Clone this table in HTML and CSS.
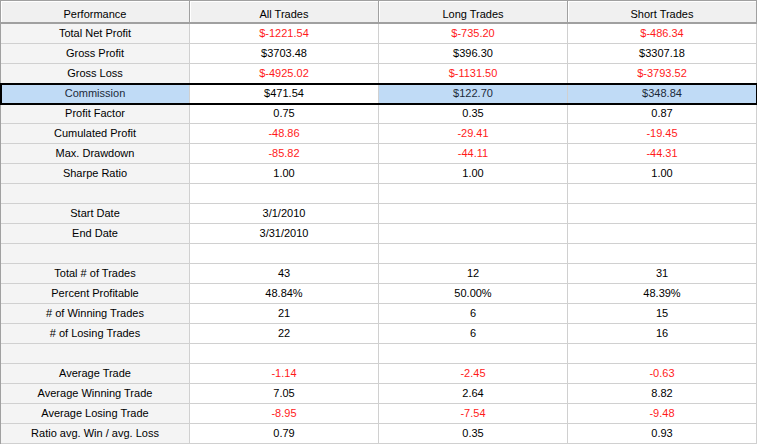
FILE: index.html
```html
<!DOCTYPE html>
<html>
<head>
<meta charset="utf-8">
<link rel="stylesheet" href="styles.css">
</head>
<body>
<div class="grid">
  <div class="row head">
    <div class="hc">Performance</div><div class="hc">All Trades</div><div class="hc">Long Trades</div><div class="hc">Short Trades</div>
  </div>
  <div class="row"><div class="lbl">Total Net Profit</div><div class="c neg">$-1221.54</div><div class="c neg">$-735.20</div><div class="c neg">$-486.34</div></div>
  <div class="row"><div class="lbl">Gross Profit</div><div class="c">$3703.48</div><div class="c">$396.30</div><div class="c">$3307.18</div></div>
  <div class="row"><div class="lbl">Gross Loss</div><div class="c neg">$-4925.02</div><div class="c neg">$-1131.50</div><div class="c neg">$-3793.52</div></div>
  <div class="row sel"><div class="lbl">Commission</div><div class="c cur">$471.54</div><div class="c">$122.70</div><div class="c">$348.84</div></div>
  <div class="row"><div class="lbl">Profit Factor</div><div class="c">0.75</div><div class="c">0.35</div><div class="c">0.87</div></div>
  <div class="row"><div class="lbl">Cumulated Profit</div><div class="c neg">-48.86</div><div class="c neg">-29.41</div><div class="c neg">-19.45</div></div>
  <div class="row"><div class="lbl">Max. Drawdown</div><div class="c neg">-85.82</div><div class="c neg">-44.11</div><div class="c neg">-44.31</div></div>
  <div class="row"><div class="lbl">Sharpe Ratio</div><div class="c">1.00</div><div class="c">1.00</div><div class="c">1.00</div></div>
  <div class="row"><div class="lbl"></div><div class="c"></div><div class="c"></div><div class="c"></div></div>
  <div class="row"><div class="lbl">Start Date</div><div class="c">3/1/2010</div><div class="c"></div><div class="c"></div></div>
  <div class="row"><div class="lbl">End Date</div><div class="c">3/31/2010</div><div class="c"></div><div class="c"></div></div>
  <div class="row"><div class="lbl"></div><div class="c"></div><div class="c"></div><div class="c"></div></div>
  <div class="row"><div class="lbl">Total # of Trades</div><div class="c">43</div><div class="c">12</div><div class="c">31</div></div>
  <div class="row"><div class="lbl">Percent Profitable</div><div class="c">48.84%</div><div class="c">50.00%</div><div class="c">48.39%</div></div>
  <div class="row"><div class="lbl"># of Winning Trades</div><div class="c">21</div><div class="c">6</div><div class="c">15</div></div>
  <div class="row"><div class="lbl"># of Losing Trades</div><div class="c">22</div><div class="c">6</div><div class="c">16</div></div>
  <div class="row"><div class="lbl"></div><div class="c"></div><div class="c"></div><div class="c"></div></div>
  <div class="row"><div class="lbl">Average Trade</div><div class="c neg">-1.14</div><div class="c neg">-2.45</div><div class="c neg">-0.63</div></div>
  <div class="row"><div class="lbl">Average Winning Trade</div><div class="c">7.05</div><div class="c">2.64</div><div class="c">8.82</div></div>
  <div class="row"><div class="lbl">Average Losing Trade</div><div class="c neg">-8.95</div><div class="c neg">-7.54</div><div class="c neg">-9.48</div></div>
  <div class="row"><div class="lbl">Ratio avg. Win / avg. Loss</div><div class="c">0.79</div><div class="c">0.35</div><div class="c">0.93</div></div>
</div>
</body>
</html>
```
FILE: styles.css
```css
html, body {
  margin: 0;
  padding: 0;
  background: #ffffff;
}
body {
  font-family: "Liberation Sans", Arial, sans-serif;
  font-size: 11px;
  color: #000000;
  width: 757px;
  height: 444px;
  overflow: hidden;
}
.grid {
  width: 757px;
  border-top: 1px solid #a0a0a0;
  border-left: 1px solid #a0a0a0;
  box-sizing: border-box;
}
.row {
  display: grid;
  grid-template-columns: 189px 189px 189px 189px;
}
.row > div {
  box-sizing: border-box;
  height: 20px;
  line-height: 19px;
  text-align: center;
  border-right: 1px solid #d0d0d0;
  border-bottom: 1px solid #d0d0d0;
  white-space: nowrap;
  overflow: hidden;
}
.row.head > .hc {
  height: 23px;
  background: #f0f0f0;
  border-right: 1px solid #a0a0a0;
  border-bottom: 2px solid #a0a0a0;
  box-shadow: inset 1px 1px 0 #ffffff;
  padding-top: 4px;
  line-height: 18px;
}
.lbl {
  background: #f4f4f4;
}
.c {
  background: #ffffff;
}
.neg {
  color: #ff1a1a;
}
.row.sel {
  outline: 2px solid #000000;
  outline-offset: -1px;
  position: relative;
}
.row.sel > .lbl,
.row.sel > .c {
  background: #c0dbf6;
  color: #1c2a3a;
}
.row.sel > .c.cur {
  background: #ffffff;
  color: #000000;
}
```
